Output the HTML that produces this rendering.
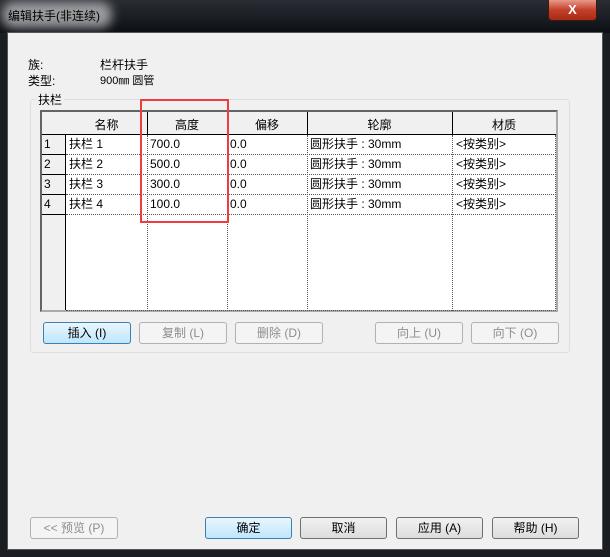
<!DOCTYPE html><html><head><meta charset="utf-8"><style>
*{margin:0;padding:0;box-sizing:border-box}
body{width:610px;height:557px;background:#1a1d22;font:12px "Liberation Sans","Noto Sans CJK SC",sans-serif;color:#000;position:relative;overflow:hidden}
.a{position:absolute}
.title{left:0;top:0;width:610px;height:33px;background:linear-gradient(#2a2e34,#0c0f14)}
.content{left:7px;top:32px;width:596px;height:518px;background:#f0f0f0;border:1px solid #555}
.btn{position:absolute;height:22px;border:1px solid #707070;border-radius:3px;background:linear-gradient(#f2f2f2,#dcdcdc);text-align:center;line-height:20px;font-size:12px}
.dis{border-color:#adb2b5;background:#f4f4f4;color:#8d8d8d}
.def{border-color:#3c7fb1;background:linear-gradient(#eaf6fd,#bee6fd)}
.cell{position:absolute;height:20px;line-height:19px;padding-left:3px;white-space:nowrap}
</style></head><body>
<div class="a title"></div>
<div class="a" style="left:2px;top:2px;width:110px;height:26px;border-radius:12px;background:rgba(255,255,255,0.55);filter:blur(5px)"></div>
<div class="a" style="left:8px;top:7px;color:#000;font-size:12px">编辑扶手(非连续)</div>
<div class="a" style="left:548px;top:0;width:49px;height:21px;background:linear-gradient(#e89a8a,#c4402a 50%,#a82a14);border:1px solid #3a1a14;border-top:none;border-radius:0 0 4px 4px;color:#fff;text-align:center;font-weight:bold;font-size:13px;line-height:19px">X</div>
<div class="a content"></div>
<div class="a" style="left:28px;top:56px">族:</div>
<div class="a" style="left:100px;top:56px">栏杆扶手</div>
<div class="a" style="left:28px;top:72px">类型:</div>
<div class="a" style="left:100px;top:72px;font-size:11px">900㎜ 圆管</div>
<div class="a" style="left:30px;top:99px;width:540px;height:254px;border:1px solid #d5dfe5;border-radius:3px"></div>
<div class="a" style="left:36px;top:91px;background:#f0f0f0;padding:0 2px">扶栏</div>
<div class="a" style="left:40px;top:110px;width:518px;height:202px;border:2px solid #646464;border-right-color:#aaa;border-bottom-color:#aaa;background:#fff"></div>
<div class="a" style="left:42px;top:112px;width:24px;height:198px;background:#f0f0f0;border-right:1px solid #000"></div>
<div class="a" style="left:42px;top:112px;width:514px;height:23px;background:#f0f0f0;border-bottom:1px solid #000"></div>
<div class="a" style="left:147px;top:112px;width:1px;height:23px;background:#000"></div>
<div class="a" style="left:227px;top:112px;width:1px;height:23px;background:#000"></div>
<div class="a" style="left:307px;top:112px;width:1px;height:23px;background:#000"></div>
<div class="a" style="left:452px;top:112px;width:1px;height:23px;background:#000"></div>
<div class="a" style="left:66px;top:116px;width:81px;text-align:center">名称</div>
<div class="a" style="left:147px;top:116px;width:80px;text-align:center">高度</div>
<div class="a" style="left:227px;top:116px;width:80px;text-align:center">偏移</div>
<div class="a" style="left:307px;top:116px;width:145px;text-align:center">轮廓</div>
<div class="a" style="left:452px;top:116px;width:104px;text-align:center">材质</div>
<div class="a" style="left:147px;top:135px;height:176px;border-left:1px dotted #555"></div>
<div class="a" style="left:227px;top:135px;height:176px;border-left:1px dotted #555"></div>
<div class="a" style="left:307px;top:135px;height:176px;border-left:1px dotted #555"></div>
<div class="a" style="left:452px;top:135px;height:176px;border-left:1px dotted #555"></div>
<div class="a" style="left:555px;top:135px;height:176px;border-left:1px dotted #555"></div>
<div class="a" style="left:66px;top:310px;width:490px;border-top:1px dotted #555"></div>
<div class="a" style="left:66px;top:154px;width:490px;border-top:1px dotted #555"></div>
<div class="a" style="left:66px;top:174px;width:490px;border-top:1px dotted #555"></div>
<div class="a" style="left:66px;top:194px;width:490px;border-top:1px dotted #555"></div>
<div class="a" style="left:66px;top:214px;width:490px;border-top:1px dotted #555"></div>
<div class="a" style="left:42px;top:154px;width:24px;border-top:1px solid #000"></div>
<div class="a" style="left:42px;top:174px;width:24px;border-top:1px solid #000"></div>
<div class="a" style="left:42px;top:194px;width:24px;border-top:1px solid #000"></div>
<div class="a" style="left:42px;top:214px;width:24px;border-top:1px solid #000"></div>
<div class="cell" style="left:41px;top:135px">1</div><div class="cell" style="left:66px;top:135px">扶栏 1</div><div class="cell" style="left:147px;top:135px">700.0</div><div class="cell" style="left:227px;top:135px">0.0</div><div class="cell" style="left:307px;top:135px">圆形扶手 : 30mm</div><div class="cell" style="left:453px;top:135px">&lt;按类别&gt;</div>
<div class="cell" style="left:41px;top:155px">2</div><div class="cell" style="left:66px;top:155px">扶栏 2</div><div class="cell" style="left:147px;top:155px">500.0</div><div class="cell" style="left:227px;top:155px">0.0</div><div class="cell" style="left:307px;top:155px">圆形扶手 : 30mm</div><div class="cell" style="left:453px;top:155px">&lt;按类别&gt;</div>
<div class="cell" style="left:41px;top:175px">3</div><div class="cell" style="left:66px;top:175px">扶栏 3</div><div class="cell" style="left:147px;top:175px">300.0</div><div class="cell" style="left:227px;top:175px">0.0</div><div class="cell" style="left:307px;top:175px">圆形扶手 : 30mm</div><div class="cell" style="left:453px;top:175px">&lt;按类别&gt;</div>
<div class="cell" style="left:41px;top:195px">4</div><div class="cell" style="left:66px;top:195px">扶栏 4</div><div class="cell" style="left:147px;top:195px">100.0</div><div class="cell" style="left:227px;top:195px">0.0</div><div class="cell" style="left:307px;top:195px">圆形扶手 : 30mm</div><div class="cell" style="left:453px;top:195px">&lt;按类别&gt;</div>
<div class="a" style="left:140px;top:99px;width:89px;height:124px;border:2px solid #f03c3c"></div>
<div class="btn def" style="left:43px;top:322px;width:88px">插入 (I)</div>
<div class="btn dis" style="left:139px;top:322px;width:88px">复制 (L)</div>
<div class="btn dis" style="left:235px;top:322px;width:88px">删除 (D)</div>
<div class="btn dis" style="left:375px;top:322px;width:88px">向上 (U)</div>
<div class="btn dis" style="left:471px;top:322px;width:88px">向下 (O)</div>
<div class="btn dis" style="left:30px;top:517px;width:88px">&lt;&lt; 预览 (P)</div>
<div class="btn def" style="left:205px;top:517px;width:87px">确定</div>
<div class="btn" style="left:300px;top:517px;width:87px">取消</div>
<div class="btn" style="left:396px;top:517px;width:87px">应用 (A)</div>
<div class="btn" style="left:492px;top:517px;width:87px">帮助 (H)</div>
</body></html>
